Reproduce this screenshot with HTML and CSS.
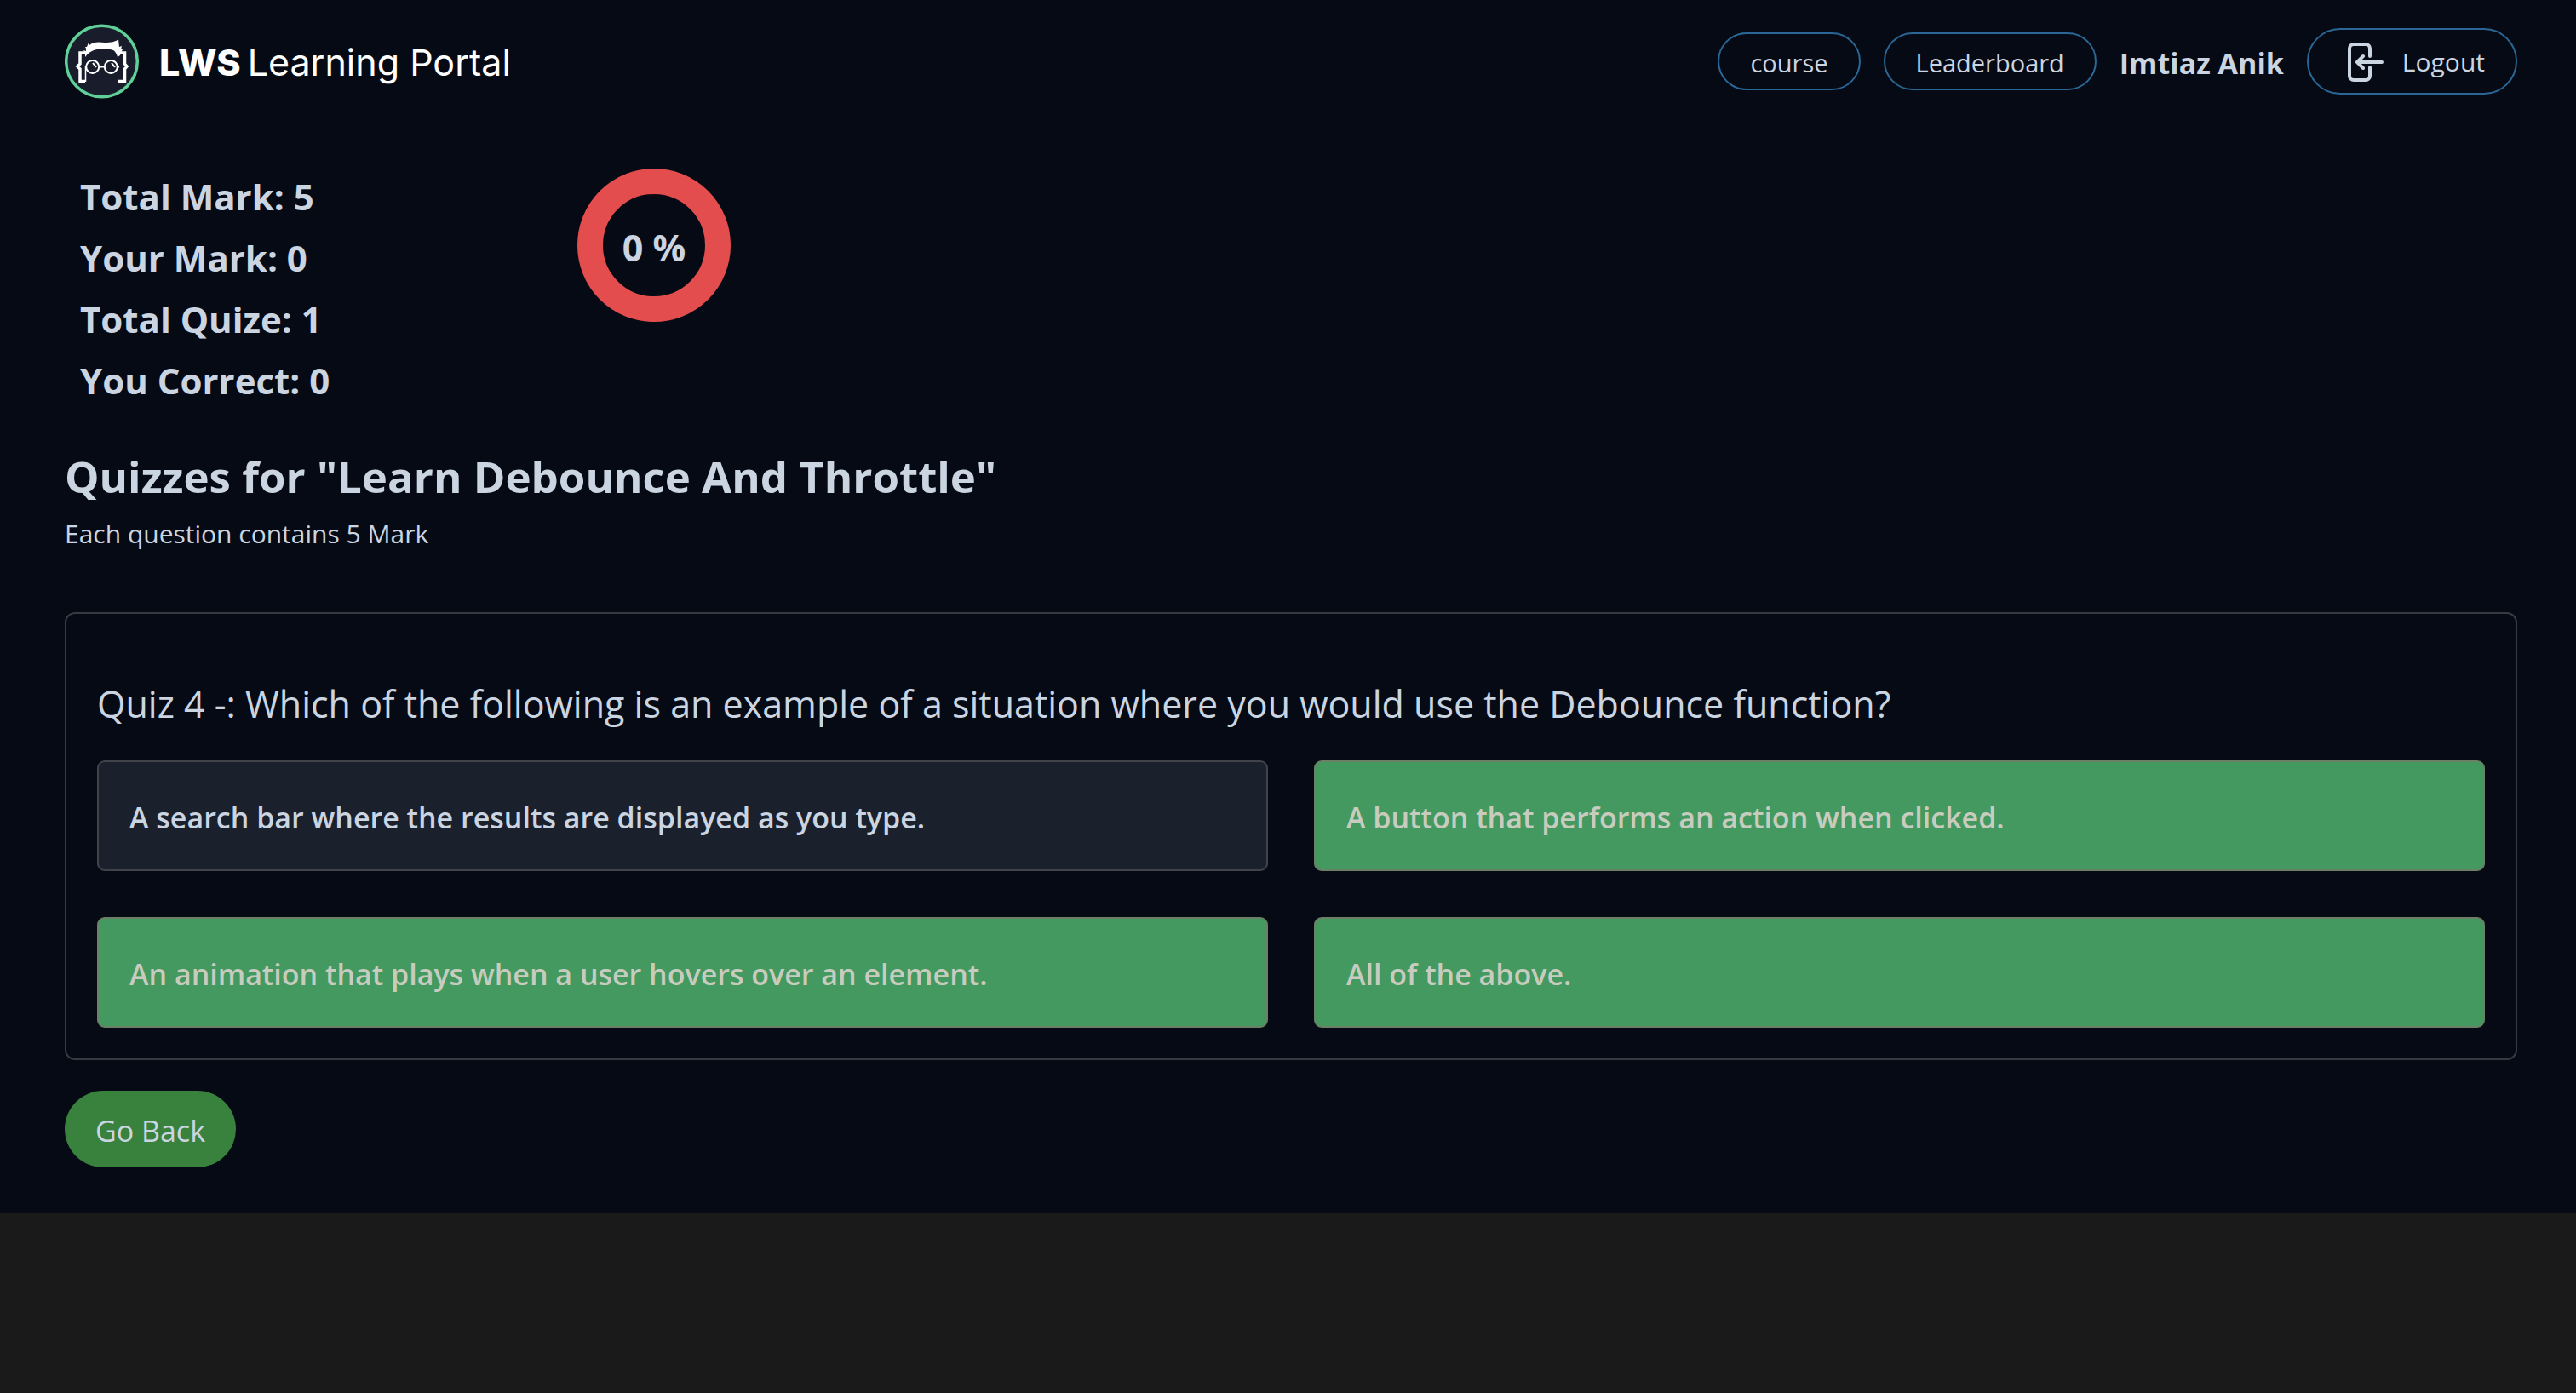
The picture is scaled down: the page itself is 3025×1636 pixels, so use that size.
FILE: index.html
```html
<!DOCTYPE html>
<html lang="en">
<head>
<meta charset="utf-8">
<meta name="viewport" content="width=device-width, initial-scale=1">
<title>LWS Learning Portal</title>
<link rel="stylesheet" href="styles.css">
</head>
<body>
<div class="page">
  <header class="topbar">
    <a class="brand" href="#">
      <svg class="brand-mark" viewBox="0 0 88 88" aria-hidden="true">
        <circle cx="43.5" cy="44" r="41.8" fill="#191d2b" stroke="#5fd098" stroke-width="3.5"/>
        <path fill="#fff" d="M24 39 24 35 22 31 25 32 25 29 24 27 26 27 28 22 29 25C33 21 40 21 47 22C54 22 60 21 63 18L64 27 67 26 66 30 68 30 66 34 65 37 62 39C61 35 59 32 57 31C50 29 38 29 32 32C28 34 26 36 24 39Z"/>
        <path fill="none" stroke="#fff" stroke-width="3.5" d="M25 34H18V47L15 50 18 53V67.500H24M63 34H70.500V47L73 50 70.500 53V67.500H63"/>
        <path fill="none" stroke="#fff" stroke-width="1.500" d="M24.500 50V68"/>
        <g fill="none" stroke="#fff" stroke-width="2">
          <circle cx="32.7" cy="50.500" r="7.500"/>
          <circle cx="54.3" cy="50.500" r="7.500"/>
          <path d="M40 50.500H47M24 50.500H26M61 50.500H64"/>
          <path d="M33 46 37 51M55 46 59 51"/>
        </g>
      </svg>
      <span class="brand-name"><b>LWS</b> <span>Learning Portal</span></span>
    </a>
    <nav class="nav">
      <a class="pill" href="#">course</a>
      <a class="pill" href="#">Leaderboard</a>
      <strong class="user">Imtiaz Anik</strong>
      <button class="pill logout" type="button">
        <svg class="logout-icon" viewBox="0 0 42 46" aria-hidden="true">
          <path d="M26 16V7a5 5 0 0 0-5-5H7a5 5 0 0 0-5 5v32a5 5 0 0 0 5 5h14a5 5 0 0 0 5-5V29M40 23H11M18 16l-7 7 7 7"/>
        </svg>
        Logout
      </button>
    </nav>
  </header>

  <main>
    <section class="summary">
      <ul class="stats">
        <li>Total Mark: 5</li>
        <li>Your Mark: 0</li>
        <li>Total Quize: 1</li>
        <li>You Correct: 0</li>
      </ul>
      <div class="ring">0 %</div>
    </section>

    <h1 class="title">Quizzes for "Learn Debounce And Throttle"</h1>
    <p class="subtitle">Each question contains 5 Mark</p>

    <section class="card">
      <h2 class="question">Quiz 4 -: Which of the following is an example of a situation where you would use the Debounce function?</h2>
      <div class="options">
        <button class="option" type="button">A search bar where the results are displayed as you type.</button>
        <button class="option correct" type="button">A button that performs an action when clicked.</button>
        <button class="option correct" type="button">An animation that plays when a user hovers over an element.</button>
        <button class="option correct" type="button">All of the above.</button>
      </div>
    </section>

    <button class="back" type="button">Go Back</button>
  </main>
</div>
</body>
</html>
```
FILE: styles.css
```css
* {
  box-sizing: border-box;
}

body {
  margin: 0;
  background: #1a1a1b;
  color: #cbd5e1;
  font-family: "Open Sans", "Noto Sans", sans-serif;
}

h1, h2, p, ul {
  margin: 0;
  padding: 0;
}

button {
  font: inherit;
  color: inherit;
  cursor: pointer;
}

.page {
  padding: 28px 69px 54px 76px;
  background: #050a14;
}

.topbar {
  display: flex;
  align-items: center;
  justify-content: space-between;
}

.brand {
  display: flex;
  align-items: center;
  gap: 23px;
  color: #fff;
  text-decoration: none;
}

.brand-mark {
  width: 88px;
  height: 88px;
}

.brand-name {
  display: flex;
  gap: 8px;
  padding-top: 2px;
  font-family: Inter, sans-serif;
  font-size: 43px;
  line-height: 54px;
  font-weight: 400;
}

.brand-name b {
  font-weight: 800;
}

.nav {
  display: flex;
  align-items: center;
  gap: 27px;
}

.pill {
  display: flex;
  align-items: center;
  padding: 12px 36px 8px;
  border: 2px solid #2a6796;
  border-radius: 40px;
  background: none;
  color: inherit;
  font-size: 29px;
  line-height: 44px;
  text-decoration: none;
}

.logout {
  gap: 22px;
  padding: 15px 36px 13px 46px;
  font-size: 30px;
}

.logout-icon {
  width: 42px;
  height: 46px;
  fill: none;
  stroke: #cbd5e1;
  stroke-width: 4;
  stroke-linecap: round;
  stroke-linejoin: round;
}

.user {
  padding-top: 3px;
  font-size: 34px;
  line-height: 44px;
  font-weight: 700;
}

.summary {
  display: grid;
  grid-template-columns: 584px 180px;
  align-items: start;
  padding: 79px 18px 0;
}

.stats {
  list-style: none;
  font-size: 42px;
  line-height: 72px;
  font-weight: 700;
}

.ring {
  display: flex;
  align-items: center;
  justify-content: center;
  width: 180px;
  height: 180px;
  margin-top: 3px;
  padding-top: 4px;
  border: 30px solid #e44d4e;
  border-radius: 50%;
  font-size: 43px;
  font-weight: 700;
}

.title {
  margin-top: 46px;
  font-size: 51px;
  line-height: 60px;
  font-weight: 700;
}

.subtitle {
  margin-top: 16px;
  font-size: 30px;
  line-height: 44px;
}

.card {
  margin-top: 70px;
  padding: 74px 36px 36px;
  border: 2px solid #363a41;
  border-radius: 12px;
}

.question {
  font-size: 43px;
  line-height: 64px;
  font-weight: 400;
}

.options {
  display: grid;
  grid-template-columns: 1fr 1fr;
  gap: 54px;
  margin-top: 34px;
}

.option {
  padding: 40px 36px 36px;
  border: 2px solid #40444a;
  border-radius: 9px;
  background: #1a202c;
  font-size: 34px;
  line-height: 50px;
  font-weight: 600;
  text-align: left;
}

.option.correct {
  border-color: #6b8065;
  background: #449960;
  color: #c8ccbf;
}

.back {
  display: block;
  margin-top: 36px;
  padding: 22px 36px 18px;
  border: 0;
  border-radius: 45px;
  background: #38823d;
  font-size: 34px;
  line-height: 50px;
}
```
